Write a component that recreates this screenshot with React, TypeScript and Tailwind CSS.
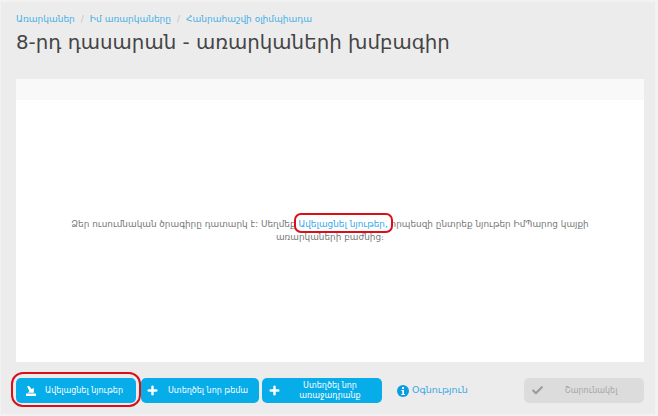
import React from 'react';
import { Plus, Check } from 'lucide-react';

const font = "font-['DejaVu_Sans','Noto_Sans',sans-serif]";

const ImportIcon = () => (
  <svg viewBox="0 0 14 14" className="w-[10px] h-[10px]" fill="white">
    <path d="M0 10.5h14V14H0z" />
    <path d="M1.5 0.5 4.5 0l3.5 4.5 3-2v7H2.5l2.3-2z" />
  </svg>
);

const InfoIcon = () => (
  <svg viewBox="0 0 12 12" className="w-[12px] h-[12px]">
    <circle cx="6" cy="6" r="6" fill="#0a9be0" />
    <rect x="5" y="2" width="2" height="2" fill="white" />
    <path d="M4.3 5h2.7v4h1v1H4.3V9h1V6h-1z" fill="white" />
  </svg>
);

const App = () => {
  return (
    <div className={`w-[658px] h-[416px] bg-[#ececec] border-t-2 border-l border-r-[3px] border-b-2 border-[#f2f2f2] overflow-hidden flex flex-col pl-[15px] pr-[11px] ${font}`}>
      {/* Breadcrumb */}
      <div className="flex items-center h-[16px] mt-[10px] text-[9px] text-[#45b0e6]">
        <span>Առարկաներ</span>
        <span className="mx-[6px] text-[#c4c4c4]">/</span>
        <span>Իմ առարկաները</span>
        <span className="mx-[6px] text-[#c4c4c4]">/</span>
        <span>Հանրահաշվի օլիմպիադա</span>
      </div>
      <h1 className="h-[30px] leading-[30px] text-[19.8px] font-normal text-[#444] whitespace-nowrap">
        8-րդ դասարան - առարկաների խմբագիր
      </h1>

      {/* Panel */}
      <div className="mt-[21px] w-[628px] h-[283px] bg-white flex flex-col shrink-0">
        <div className="h-[21px] bg-[#f9f9f9]" />
        <div className="flex-1 flex items-center justify-center pb-px">
          <p className="text-[8.9px] leading-[13px] text-[#777] text-center w-[530px]">
            Ձեր ուսումնական ծրագիրը դատարկ է: Սեղմեք{' '}
            <span className="relative text-[#2fa9e6]">
              Ավելացնել նյութեր,
              <span className="absolute -left-[4px] -right-[5px] -top-[6px] -bottom-[4px] border-2 border-[#d9101a] rounded-[7px]" />
            </span>{' '}
            որպեսզի ընտրեք նյութեր ԻմՊարոց կայքի առարկաների բաժնից։
          </p>
        </div>
      </div>

      {/* Toolbar */}
      <div className="mt-[16px] flex items-center h-[25px] text-[8px]">
        <div className="relative w-[120px] h-[25px] bg-[#07ade9] rounded-[5px] flex items-center text-white">
          <span className="ml-[10px] w-[10px]"><ImportIcon /></span>
          <span className="ml-[9px]">Ավելացնել նյութեր</span>
          <span className="absolute -left-[5px] -right-[5px] -top-[6px] -bottom-[4px] border-2 border-[#d9101a] rounded-[12px]" />
        </div>
        <div className="ml-[5px] w-[118px] h-[25px] bg-[#07ade9] rounded-[5px] flex items-center text-white">
          <Plus className="ml-[5px] w-[13px] h-[13px]" strokeWidth={4.5} />
          <span className="ml-[9px]">Ստեղծել նոր թեմա</span>
        </div>
        <div className="ml-[3px] w-[120px] h-[25px] bg-[#07ade9] rounded-[5px] flex items-center text-white">
          <Plus className="ml-[6px] w-[13px] h-[13px] shrink-0" strokeWidth={4.5} />
          <span className="flex-1 text-center leading-[10px] pr-[3px]">Ստեղծել նոր<br />առաջադրանք</span>
        </div>
        <div className="ml-[15px] flex items-center text-[#3aa8e6] text-[9.5px]">
          <InfoIcon />
          <span className="ml-[3px]">Օգնություն</span>
        </div>
        <div className="ml-auto w-[120px] h-[25px] bg-[#dcdcdc] rounded-[5px] flex items-center text-[#a5a5a5]">
          <Check className="ml-[7px] w-[13px] h-[13px] text-[#9c9c9c]" strokeWidth={4} />
          <span className="flex-1 text-center pr-[6px]">Շարունակել</span>
        </div>
      </div>
    </div>
  );
};

export default App;
